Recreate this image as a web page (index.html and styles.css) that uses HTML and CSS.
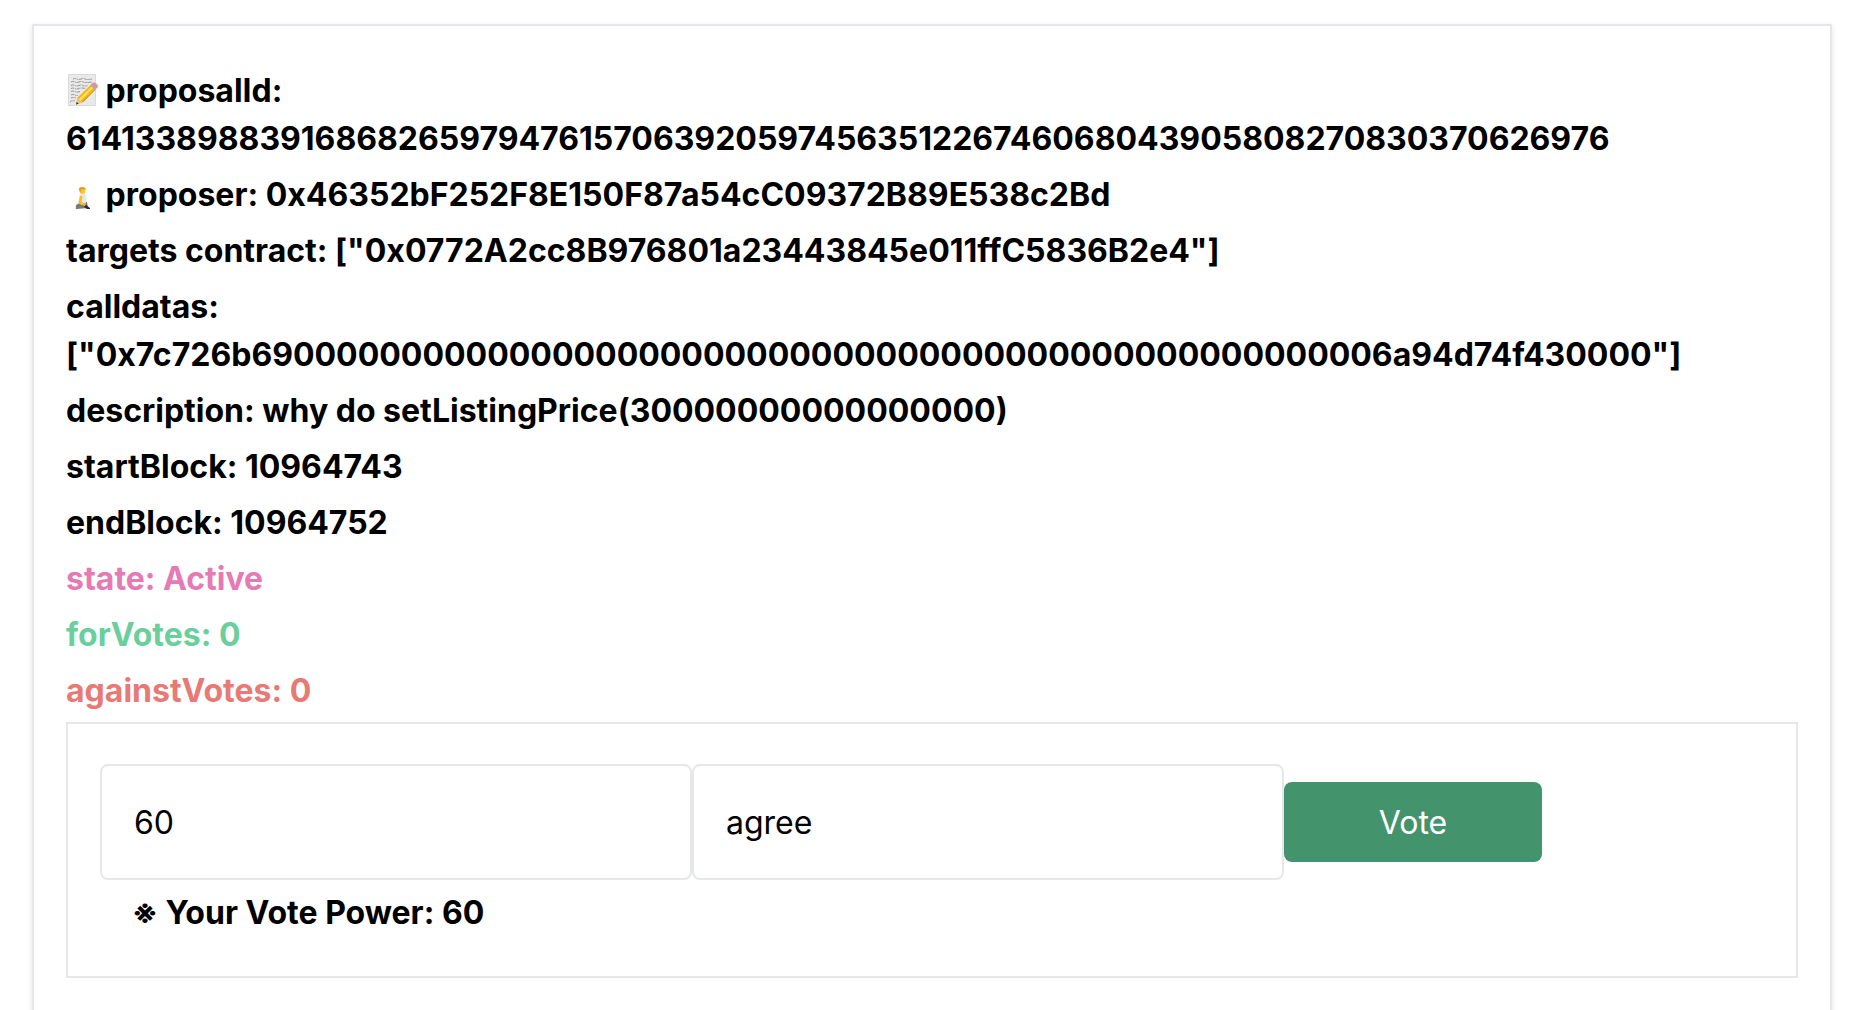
FILE: index.html
```html
<!DOCTYPE html>
<html lang="en">
<head>
<meta charset="utf-8">
<title>Proposal</title>
<link rel="stylesheet" href="styles.css">
</head>
<body>
<main class="card">
  <p class="row"><svg class="icon" viewBox="0 0 32 32" aria-hidden="true"><path d="M2.5.5h27v31h-27z" fill="#e9e9e9" stroke="#dadada"/><g fill="none" stroke="#8a8a8a" stroke-width=".9" stroke-dasharray="3 .7 1.5 .6 4 1"><path d="M7 5q2-1 4 0t4 0 4 0 7 0"/><path d="M5 8q2-1 4 0t4 0 4 0 9 0"/><path d="M5 11.500q2-1 4 0t4 0 4 0 5 0"/><path d="M5 14.500q2-1 4 0t4 0 6 0"/><path d="M5 17.500q2-1 4 0t5 0"/><path d="M5 21q2-1 4 0t3 0"/><path d="M5 24q2-1 5 0"/><path d="M4 28q2-2 5-1"/></g><path d="M10 30.500l1.500-7L25 10.500l5 4.500-13 13z" fill="#f3b71c"/><path d="M13 25L26.500 11.500l1.500 1.500L14.500 27z" fill="#ffe05a"/><path d="M16 28L28.500 16l1.500-1-13 13z" fill="#b87b14"/><path d="M24 11.500l2-2 5 4.500-2 2z" fill="#a9afb5"/><path d="M25.500 9.500q2-1.500 4-.5 2.500 1.500 2.500 4l-2 1.500z" fill="#ee8a91"/><path d="M10 30.500l1.500-6.500 5 4.500z" fill="#e8c48a"/><path d="M10 30.500l.7-2.500 2 1.700z" fill="#333"/></svg> proposalId: 61413389883916868265979476157063920597456351226746068043905808270830370626976</p>
  <p class="row"><svg class="icon" viewBox="0 0 32 32" aria-hidden="true"><path d="M10 29q-1-2 2-3l4-4 5 2 1 6-11 1q-2 0-1-2z" fill="#77797d"/><path d="M19 26l5 4v1h-3l-3-2z" fill="#252c49"/><path d="M14 16h5l1.500 3-.5 6q-3 1-6 0l-1-5z" fill="#e5e7ea"/><path d="M14 18q2-1 2.500 1l-1 5 4.500 2-1 2-6-2q-1-1 0-4z" fill="#f9bd1f"/><circle cx="16.500" cy="13" r="2.900" fill="#ffc52b"/><path d="M13 12q-.5-3 3-3 4 0 4 3l-2-1-3 .5-.5 3z" fill="#e69b17"/></svg> proposer: 0x46352bF252F8E150F87a54cC09372B89E538c2Bd</p>
  <p class="row">targets contract: ["0x0772A2cc8B976801a23443845e011ffC5836B2e4"]</p>
  <p class="row">calldatas: ["0x7c726b69000000000000000000000000000000000000000000000000006a94d74f430000"]</p>
  <p class="row">description: why do setListingPrice(30000000000000000)</p>
  <p class="row">startBlock: 10964743</p>
  <p class="row">endBlock: 10964752</p>
  <p class="row state">state: Active</p>
  <p class="row for">forVotes: 0</p>
  <p class="row against">againstVotes: 0</p>
  <form class="vote">
    <div class="fields">
      <input class="field" type="text" value="60" aria-label="Votes">
      <input class="field" type="text" value="agree" aria-label="Reason">
      <button class="button" type="button">Vote</button>
    </div>
    <p class="power">※ Your Vote Power: 60</p>
  </form>
</main>
</body>
</html>
```
FILE: styles.css
```css
* { box-sizing: border-box; }
body { margin: 0; background: #fff; color: #000; font: 32px/48px Inter, "Noto Sans CJK JP", sans-serif; }
.card { margin: 24px 38px 0 32px; padding: 33px 32px 32px; border: 2px solid #e5e7eb; box-shadow: 0 2px 6px rgba(0, 0, 0, .1); min-height: 100vh; }
.row { margin: 0; padding: 8px 0 0; font-weight: 700; }
.icon { width: 32px; height: 32px; vertical-align: -4px; }
.state { color: #e57ab5; }
.for { color: #6bcf9c; }
.against { color: #e77a74; }
.vote { margin-top: 7px; padding: 40px 32px 39px; border: 2px solid #e5e7eb; }
.fields { display: flex; align-items: center; }
.field { width: 592px; height: 116px; padding: 32px; border: 2px solid #e5e7eb; border-radius: 8px; background: #fff; font: inherit; color: #000; }
.button { width: 258px; height: 80px; padding: 2px 0 0; border: 0; border-radius: 8px; background: #43936c; color: #fff; font: inherit; }
.power { margin: 9px 32px 0; font-weight: 700; }
```
